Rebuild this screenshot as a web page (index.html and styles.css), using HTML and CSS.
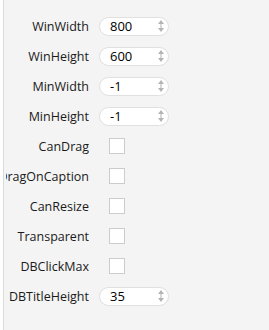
FILE: index.html
```html
<!DOCTYPE html>
<html>
<head>
<meta charset="utf-8">
<link rel="stylesheet" href="styles.css">
</head>
<body>
<div class="panel">
  <div class="row"><div class="label">WinWidth</div><div class="num"><span class="val">800</span><svg class="spin" width="6" height="12" viewBox="0 0 6 12"><path d="M3 0 L6 4 L0 4 Z M3 12 L6 8 L0 8 Z M2.5 4 h1 v4 h-1 Z" fill="#b4b4b4"/></svg></div></div>
  <div class="row"><div class="label">WinHeight</div><div class="num"><span class="val">600</span><svg class="spin" width="6" height="12" viewBox="0 0 6 12"><path d="M3 0 L6 4 L0 4 Z M3 12 L6 8 L0 8 Z M2.5 4 h1 v4 h-1 Z" fill="#b4b4b4"/></svg></div></div>
  <div class="row"><div class="label">MinWidth</div><div class="num"><span class="val">-1</span><svg class="spin" width="6" height="12" viewBox="0 0 6 12"><path d="M3 0 L6 4 L0 4 Z M3 12 L6 8 L0 8 Z M2.5 4 h1 v4 h-1 Z" fill="#b4b4b4"/></svg></div></div>
  <div class="row"><div class="label">MinHeight</div><div class="num"><span class="val">-1</span><svg class="spin" width="6" height="12" viewBox="0 0 6 12"><path d="M3 0 L6 4 L0 4 Z M3 12 L6 8 L0 8 Z M2.5 4 h1 v4 h-1 Z" fill="#b4b4b4"/></svg></div></div>
  <div class="row"><div class="label">CanDrag</div><div class="check"></div></div>
  <div class="row"><div class="label">DragOnCaption</div><div class="check"></div></div>
  <div class="row"><div class="label">CanResize</div><div class="check"></div></div>
  <div class="row"><div class="label">Transparent</div><div class="check"></div></div>
  <div class="row"><div class="label">DBClickMax</div><div class="check"></div></div>
  <div class="row"><div class="label">DBTitleHeight</div><div class="num"><span class="val">35</span><svg class="spin" width="6" height="12" viewBox="0 0 6 12"><path d="M3 0 L6 4 L0 4 Z M3 12 L6 8 L0 8 Z M2.5 4 h1 v4 h-1 Z" fill="#b4b4b4"/></svg></div></div>
</div>
</body>
</html>
```
FILE: styles.css
```css
html, body {
  margin: 0;
  padding: 0;
  background: #ffffff;
}
body {
  font-family: "Open Sans", "Noto Sans CJK SC", sans-serif;
  font-size: 12.5px;
  color: #1a1a1a;
}
.panel {
  margin-left: 3px;
  border-left: 1px solid #dadada;
  background: #f4f4f4;
  height: 330px;
  box-sizing: border-box;
  padding-top: 11px;
}
.row {
  display: flex;
  align-items: center;
  height: 30px;
}
.label {
  width: 83px;
  flex: none;
  text-align: right;
  white-space: nowrap;
  overflow: hidden;
  direction: rtl;
  margin-left: 2px;
  margin-right: 10px;
}
.num {
  width: 70px;
  height: 19px;
  box-sizing: border-box;
  border: 1px solid #e0e0e0;
  border-radius: 10px;
  background: #fff;
  display: flex;
  align-items: center;
  justify-content: space-between;
  padding: 0 4px 0 10px;
  color: #000;
  font-size: 13px;
}
.val {
  line-height: 17px;
}
.spin {
  display: block;
}
.check {
  width: 16px;
  height: 16px;
  box-sizing: border-box;
  border: 1.5px solid #cccccc;
  background: #fff;
  margin-left: 10px;
}
```
